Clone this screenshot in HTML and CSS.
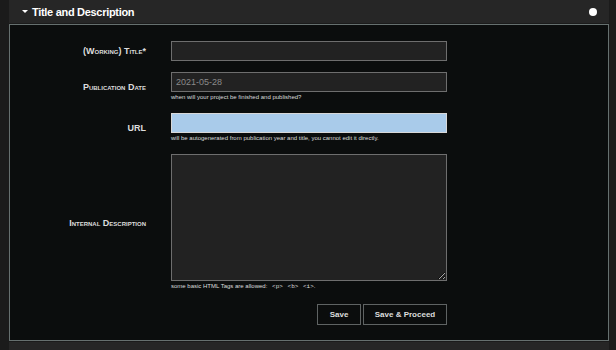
FILE: index.html
```
<!DOCTYPE html>
<html lang="en">
<head>
  <meta charset="UTF-8" />
  <meta name="viewport" content="width=device-width, initial-scale=1.0" />
  <title>Title and Description</title>
  <link rel="stylesheet" href="styles.css">
</head>
<body>
  <div class="section">
    <div class="section-head">
      <span class="caret"></span>
      <h2>Title and Description</h2>
      <span class="status-dot"></span>
    </div>
    <form class="panel">
      <div class="row">
        <label for="title">(Working) Title*</label>
        <div class="field">
          <input type="text" id="title" />
        </div>
      </div>
      <div class="row">
        <label for="pubdate">Publication Date</label>
        <div class="field">
          <input type="text" id="pubdate" placeholder="2021-05-28" />
          <div class="hint">when will your project be finished and published?</div>
        </div>
      </div>
      <div class="row">
        <label for="url">URL</label>
        <div class="field">
          <input type="text" id="url" class="readonly" readonly />
          <div class="hint">will be autogenerated from publication year and title, you cannot edit it directly.</div>
        </div>
      </div>
      <div class="row">
        <label for="desc">Internal Description</label>
        <div class="field">
          <textarea id="desc"></textarea>
          <div class="hint">some basic HTML Tags are allowed: <code>&lt;p&gt;</code> <code>&lt;b&gt;</code> <code>&lt;i&gt;</code>.</div>
        </div>
      </div>
      <div class="actions">
        <button type="button">Save</button>
        <button type="button">Save &amp; Proceed</button>
      </div>
    </form>
    <div class="next-section"></div>
  </div>
</body>
</html>
```

FILE: styles.css
```
body {
  margin: 0;
  background-color: #1b1b1b;
  color: #ddd;
  font-family: 'Liberation Sans', Arial, sans-serif;
}

.section {
  margin: 0 7px 0 9px;
}

.section-head {
  height: 23px;
  background-color: #262626;
  display: flex;
  align-items: center;
  padding: 0 12px 0 13px;
}

.caret {
  width: 0;
  height: 0;
  border-left: 3px solid transparent;
  border-right: 3px solid transparent;
  border-top: 3px solid #fff;
  margin-right: 4px;
}

.section-head h2 {
  flex: 1;
  margin: 0;
  font-size: 11px;
  font-weight: bold;
  letter-spacing: -0.3px;
  color: #fff;
}

.status-dot {
  width: 8px;
  height: 8px;
  border-radius: 50%;
  background-color: #fff;
}

.panel {
  margin-top: 1px;
  border: 1px solid #66706f;
  background-color: #0b0d0d;
  padding: 16px 0 15px 0;
  display: flex;
  flex-direction: column;
  gap: 11px;
}

.row {
  display: flex;
  align-items: center;
  gap: 25px;
}

.row label {
  width: 136px;
  text-align: right;
  font-size: 9px;
  font-weight: bold;
  font-variant: small-caps;
  color: #ddd;
}

.field {
  width: 276px;
}

.field input,
.field textarea {
  display: block;
  box-sizing: border-box;
  width: 100%;
  height: 20px;
  margin: 0;
  padding: 0 4px;
  background-color: #222;
  border: 1px solid #6e6e6e;
  color: #ddd;
  font-family: inherit;
  font-size: 9px;
  outline: none;
}

.field input::placeholder {
  color: #8a8a8a;
}

.field input.readonly {
  background-color: #a9cbea;
  border-color: #d8d8d8;
}

.field textarea {
  height: 127px;
  resize: vertical;
}

.hint {
  font-size: 6px;
  line-height: 10px;
  color: #ddd;
}

.hint code {
  font-family: 'Liberation Mono', monospace;
  font-size: 6px;
  margin-left: 3px;
}

.actions {
  display: flex;
  gap: 2px;
  padding-left: 307px;
  margin-top: 1px;
}

.actions button {
  height: 21px;
  padding: 0;
  background-color: transparent;
  border: 1px solid #5f6363;
  color: #ddd;
  font-family: inherit;
  font-size: 8px;
  font-weight: bold;
  cursor: pointer;
}

.actions button:first-child {
  width: 44px;
}

.actions button:last-child {
  width: 84px;
}

.next-section {
  margin-top: 1px;
  height: 10px;
  background-color: #262626;
}
```
